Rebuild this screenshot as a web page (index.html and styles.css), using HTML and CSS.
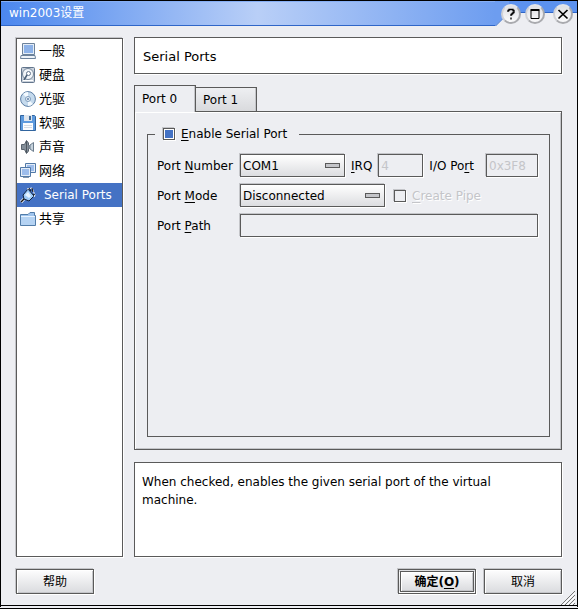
FILE: index.html
```html
<!DOCTYPE html>
<html lang="zh-CN">
<head>
  <meta charset="UTF-8">
  <meta name="viewport" content="width=device-width, initial-scale=1">
  <title>win2003设置</title>
  <link rel="stylesheet" href="styles.css">
</head>
<body>

<div class="window">
  <header class="titlebar">
    <h1 class="title">win2003设置</h1>
    <svg class="title-slope" viewBox="0 0 14 25" aria-hidden="true">
      <path d="M0 0H14V11L0 25Z" fill="#6d9df0"/>
      <path d="M14 11.500L0.500 25" fill="none" stroke="#2f66c8"/>
    </svg>
    <div class="title-buttons">
      <button class="round" type="button" aria-label="Help">
        <svg viewBox="0 0 20 20"><path d="M7 8V6.500H8V5.500H12V6.500H13V8.500H12V9.500H11V10.500H10V12M10 13.500V15.500" fill="none" stroke="#000" stroke-width="1.300"/></svg>
      </button>
      <button class="round" type="button" aria-label="Maximize">
        <svg viewBox="0 0 20 20"><path d="M6 6.500V14.500H14V6.500" fill="none" stroke="#000"/><path d="M5.500 5H14.500V7H5.500Z"/></svg>
      </button>
      <button class="round close" type="button" aria-label="Close">
        <svg viewBox="0 0 20 20"><path d="M5.500 6L14.500 14.500M14.500 6L5.500 14.500" fill="none" stroke="#000" stroke-width="1.700"/></svg>
      </button>
    </div>
  </header>

  <main class="content">
    <nav class="sidebar">
      <a href="#general">
        <svg viewBox="0 0 16 16"><path d="M2.500.500H14.500V11.500H2.500Z" fill="#e4edf7" stroke="#6c829b"/><path d="M4 2H13V10H4Z" fill="#8db2e8"/><path d="M1 12.500H15L15.500 15.500H.5Z" fill="#eef3f8" stroke="#6c829b"/></svg>
        一般</a>
      <a href="#harddisk">
        <svg viewBox="0 0 16 16"><rect x="1.500" y=".5" width="13" height="15" rx="1" fill="#c8d0da" stroke="#62758c"/><circle cx="8" cy="7" r="5.500" fill="#f1f5f9" stroke="#75879b"/><circle cx="8.500" cy="6.500" r="2" fill="#fff" stroke="#62758c"/><path d="M4 13L7 8" stroke="#4b6078" stroke-width="1.500"/><path d="M3 13.500H13" stroke="#fff"/></svg>
        硬盘</a>
      <a href="#cdrom">
        <svg viewBox="0 0 16 16"><circle cx="8" cy="8" r="7.400" fill="#c5daed" stroke="#5c7ea4"/><path d="M8 8L3 3A7 7 0 0 1 8 1ZM8 8L13 13A7 7 0 0 1 8 15Z" fill="#f4faff"/><circle cx="8" cy="8" r="2.500" fill="#e9f2fa" stroke="#7e9cbb"/><circle cx="8" cy="8" r="1" fill="#5c7ea4"/></svg>
        光驱</a>
      <a href="#floppy">
        <svg viewBox="0 0 16 16"><path d="M.5.500H14.500L15.500 1.500V15.500H.5Z" fill="#5d9ade" stroke="#31649e"/><path d="M4 0H12V6H4Z" fill="#e0e6ed"/><path d="M9 1H11V5H9Z" fill="#426a96"/><path d="M3 8H13V15H3Z" fill="#fafcff"/><path d="M4 10.500H12M4 12.500H12" stroke="#d3dbe4"/></svg>
        软驱</a>
      <a href="#audio">
        <svg viewBox="0 0 16 16"><path d="M1.500 5.500H4.500L6.500 1.500L8.500 4V12L6.500 14.500L4.500 10.500H1.500Z" fill="#848f99" stroke="#59636d"/><path d="M6.500 2V14" stroke="#4d565f"/><path d="M8.500 6H10V10H8.500Z" fill="#8b96a0"/><path d="M10 6L13.500 3.500V12.500L10 10Z" fill="#c6d2dc" stroke="#6b7c8c"/></svg>
        声音</a>
      <a href="#network">
        <svg viewBox="0 0 16 16"><path d="M5.500.500H15.500V9.500H5.500Z" fill="#e4edf7" stroke="#5279a7"/><path d="M7 2H14V8H7Z" fill="#9dbdec"/><path d="M.5 4.500H10.500V13.500H.5Z" fill="#e4edf7" stroke="#5279a7"/><path d="M2 6H9V12H2Z" fill="#9dbdec"/><path d="M3 14.500H9" stroke="#8195ac"/></svg>
        网络</a>
      <a class="active" href="#serial">
        <svg viewBox="0 0 16 16"><path d="M1 15L5 11" stroke="#fff" stroke-width="3"/><path d="M1 15L5 11" stroke="#111" stroke-width="1.500"/><path d="M3 8L8 2L14 9L9 14L4 12Z" fill="#9fcbf7" stroke="#10203a"/><path d="M5 8L8 5L11 9L9 11Z" fill="#e6f3ff"/><path d="M7 2L12 1L15 8L14 10" fill="none" stroke="#fff"/><path d="M9 1L11 4M12 1L13 5M15 7L13 8" fill="none" stroke="#111"/></svg>
        <span>Serial Ports</span></a>
      <a href="#shared">
        <svg viewBox="0 0 16 16"><path d="M.5 3.500H8L10 1.500H14.500V4.500H15.500V14.500H.5Z" fill="#9fc4ed" stroke="#527da9"/><path d="M1 5H15V14H1Z" fill="#b5d3f3"/><path d="M1 5.500H15" stroke="#e7f3ff"/></svg>
        共享</a>
    </nav>

    <section class="page">
      <h2 class="page-title">Serial Ports</h2>

      <div class="tabs">
        <div class="tab-row" role="tablist">
          <button class="tab selected" type="button" role="tab" aria-selected="true">Port 0</button>
          <button class="tab" type="button" role="tab" aria-selected="false">Port 1</button>
        </div>
        <div class="tab-panel" role="tabpanel">
          <fieldset class="group">
            <legend>
              <label class="check"><input type="checkbox" checked><span><u>E</u>nable Serial Port</span></label>
            </legend>
            <div class="form">
              <label for="number">Port <u>N</u>umber</label>
              <div class="fields">
                <select class="number" id="number"><option>COM1</option></select>
                <label for="irq"><u>I</u>RQ</label>
                <input class="irq" id="irq" type="text" value="4" disabled>
                <label for="io">I/O Po<u>r</u>t</label>
                <input class="io" id="io" type="text" value="0x3F8" disabled>
              </div>
              <label for="mode">Port <u>M</u>ode</label>
              <div class="fields">
                <select class="mode" id="mode"><option>Disconnected</option></select>
                <label class="check off"><input type="checkbox" disabled><span><u>C</u>reate Pipe</span></label>
              </div>
              <label for="path">Port <u>P</u>ath</label>
              <div class="fields">
                <input class="path" id="path" type="text">
              </div>
            </div>
          </fieldset>
        </div>
      </div>

      <p class="hint">When checked, enables the given serial port of the virtual machine.</p>
    </section>
  </main>

  <footer class="actions">
    <button class="push help" type="button">帮助</button>
    <button class="push default" type="button">确定(<u>O</u>)</button>
    <button class="push" type="button">取消</button>
  </footer>
  <svg class="grip" viewBox="0 0 14 14" aria-hidden="true">
    <path d="M0 14L14 0M4 14L14 4M8 14L14 8M12 14L14 12" stroke="#777"/>
    <path d="M2 14L14 2M6 14L14 6M10 14L14 10" stroke="#fff"/>
  </svg>
</div>

</body>
</html>
```
FILE: styles.css
```css
* {
  box-sizing: border-box;
}

body {
  margin: 0;
  background: #edeef2;
  color: #000;
  font: 12px/18px "DejaVu Sans", "Noto Sans CJK SC", sans-serif;
}

button,
input,
select {
  font: inherit;
  color: inherit;
  margin: 0;
}

u {
  text-underline-offset: 2px;
}

.window {
  position: relative;
  display: flex;
  flex-direction: column;
  min-height: 100vh;
  border: 1px solid #000;
  border-bottom: 4px double #000;
}

/* title bar */
.titlebar {
  display: flex;
  height: 25px;
  background: linear-gradient(#5c92ef 11px, #2f66c8 11px, #2f66c8 12px, #edeef2 12px);
}

.title {
  flex: 1;
  margin: 0;
  padding-left: 8px;
  background: linear-gradient(90deg, #4b87ee, #b9cff7 52%, #6d9df0);
  border-top: 1px solid #86aff5;
  border-bottom: 1px solid #2f66c8;
  color: #fff;
  font-size: 12px;
  font-weight: normal;
  line-height: 22px;
}

.title-slope {
  width: 14px;
  height: 25px;
}

.title-buttons {
  display: flex;
  gap: 4px;
  align-items: center;
  padding-right: 4px;
  margin-left: -8px;
}

.round {
  width: 20px;
  height: 20px;
  padding: 0;
  border: 2px solid #c3c4c8;
  border-color: #e4e5e9 #a9aaae #a9aaae #d0d1d5;
  border-radius: 50%;
  background: linear-gradient(#dfe0e4, #fafafb);
}

.round svg {
  display: block;
  width: 20px;
  height: 20px;
  margin: -2px;
}

.round.close {
  margin-left: 4px;
}

/* main area */
.content {
  flex: 1;
  display: grid;
  grid-template-columns: 107px minmax(0, 1fr);
  gap: 11px;
  padding: 11px 15px 0;
}

.sidebar {
  margin-top: 1px;
  border: 1px solid #5a5a5a;
  background: #fff;
  box-shadow: -1px -1px #c4c5c9, 1px 1px #fff;
}

.sidebar a {
  display: flex;
  align-items: center;
  gap: 3px;
  height: 24px;
  padding-left: 3px;
  color: #000;
  font-size: 13px;
  text-decoration: none;
  white-space: nowrap;
}

.sidebar svg {
  flex: none;
  width: 16px;
  height: 16px;
}

.sidebar .active {
  background: #4472c4;
  color: #fff;
  font-size: 12px;
}

.active span {
  padding-left: 5px;
}

.page {
  display: flex;
  flex-direction: column;
  min-width: 0;
}

.page-title,
.hint {
  margin: 0;
  border: 1px solid #5a5a5a;
  background: #fff;
  box-shadow: 1px 1px #fff;
}

.page-title {
  height: 37px;
  padding-left: 8px;
  font-size: 13px;
  font-weight: normal;
  line-height: 37px;
}

.hint {
  height: 95px;
  padding: 10px 48px 10px 7px;
}

/* tabs */
.tabs {
  flex: 1;
  display: flex;
  flex-direction: column;
  margin: 11px 0 12px;
}

.tab-row {
  display: flex;
  align-items: flex-end;
}

.tab {
  height: 24px;
  width: 62px;
  margin-left: -1px;
  padding: 0 0 0 7px;
  border: 1px solid #5a5a5a;
  border-bottom: 0;
  background: linear-gradient(#eeeff2, #d9dadd);
  box-shadow: inset -1px 0 #c4c5c9;
  text-align: left;
}

.tab.selected {
  position: relative;
  height: 27px;
  margin: 0 0 -1px;
  background: #edeef2;
}

.tab-panel {
  flex: 1;
  display: flex;
  padding: 12px 11px 12px 12px;
  border: 1px solid #5a5a5a;
  box-shadow: inset 1px 1px #fff, inset -1px -1px #c4c5c9;
}

.group {
  flex: 1;
  min-width: 0;
  margin: 0;
  padding: 10px 11px 10px 9px;
  border: 1px solid #5a5a5a;
}

.group legend {
  margin-left: -2px;
  padding: 1px 12px 1px 8px;
}

.check {
  display: flex;
  align-items: center;
  gap: 6px;
}

.check input {
  appearance: none;
  width: 12px;
  height: 12px;
  border: 1px solid #5a5a5a;
  box-shadow: -1px -1px #c4c5c9, 1px 1px #fff;
}

.check input:checked {
  background: #4472c4;
  box-shadow: inset 0 0 0 1px #fff, -1px -1px #c4c5c9, 1px 1px #fff;
}

.off {
  margin-left: 3px;
  color: #c4c5c9;
  text-shadow: 1px 1px #fff;
}

/* form */
.form {
  display: grid;
  grid-template-columns: 77px minmax(0, 1fr);
  gap: 7px 6px;
  align-items: center;
  white-space: nowrap;
}

.fields {
  display: flex;
  align-items: center;
  gap: 6px;
}

.fields input[type="text"],
.fields select {
  appearance: none;
  height: 23px;
  min-width: 0;
  padding: 0 2px;
  border: 1px solid #5a5a5a;
  border-radius: 0;
  background: #edeef2;
  box-shadow: -1px -1px #c4c5c9, 1px 1px #fff;
}

.fields select {
  background:
    linear-gradient(#c4c5c9, #c4c5c9) no-repeat right 5px center / 13px 3px,
    linear-gradient(#5a5a5a, #5a5a5a) no-repeat right 4px center / 15px 5px,
    linear-gradient(#fff, #dcdde0);
}

.fields input:disabled {
  color: #c4c5c9;
}

.fields .number {
  width: 105px;
}

.fields .mode {
  width: 145px;
}

.fields .irq {
  width: 45px;
}

.fields .io {
  width: 52px;
  margin-left: auto;
}

.fields .path {
  flex: 1;
}

/* bottom buttons */
.actions {
  display: flex;
  gap: 8px;
  padding: 12px 15px 11px;
}

.push {
  width: 78px;
  height: 25px;
  padding: 0;
  border: 1px solid #5a5a5a;
  background: linear-gradient(#fdfdfe, #dadbde);
  box-shadow: inset 1px 1px #fff, inset -1px -1px #c4c5c9, -1px -1px #c4c5c9, 1px 1px #fff;
  font-size: 12px;
}

.help {
  margin-right: auto;
}

.default {
  border: 3px double #5a5a5a;
  font-weight: bold;
}

.grip {
  position: absolute;
  right: 2px;
  bottom: 0;
  width: 14px;
  height: 14px;
}
```
